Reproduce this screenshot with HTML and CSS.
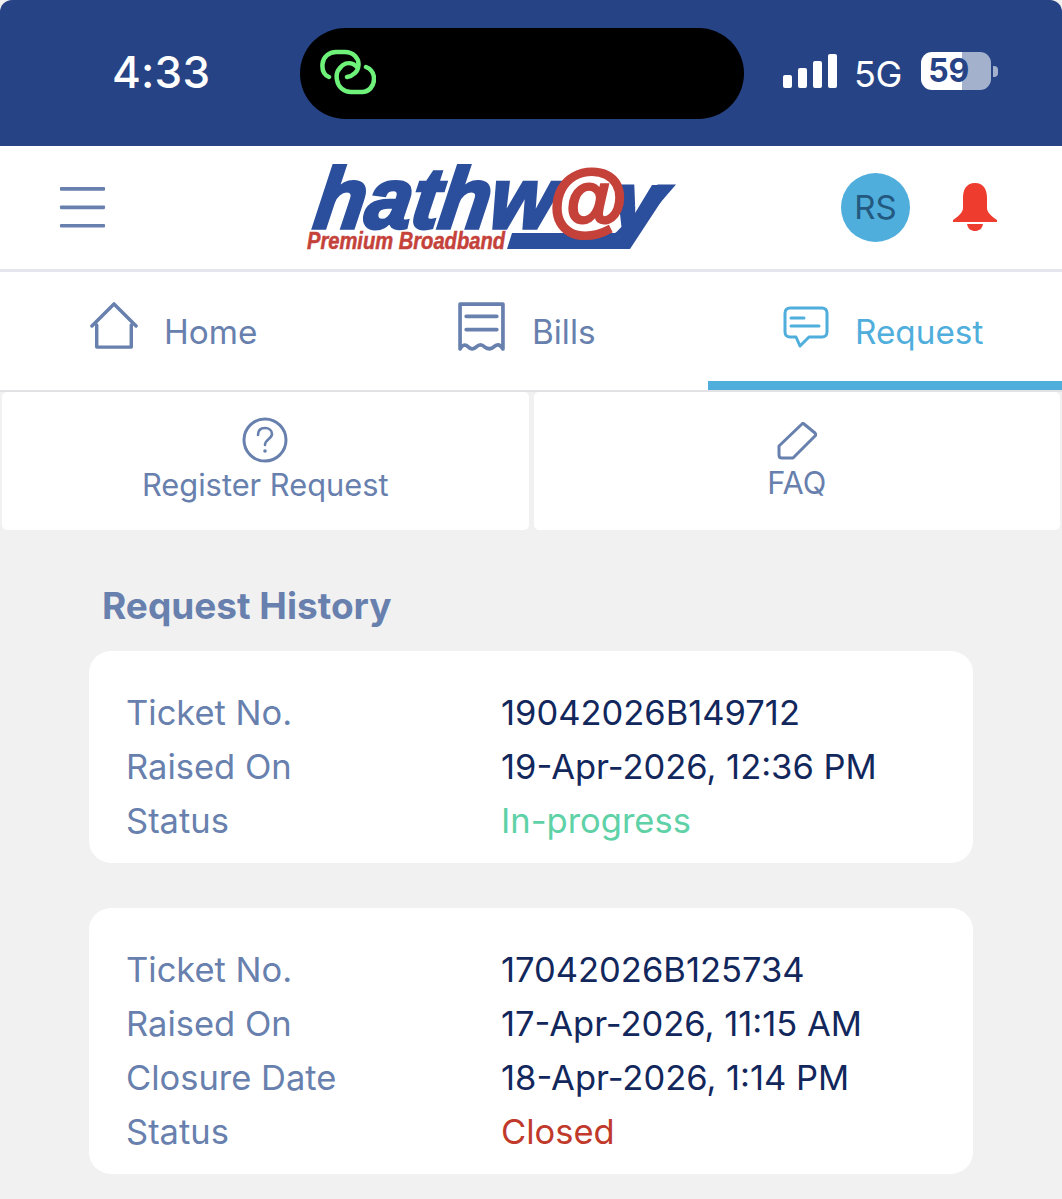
FILE: index.html
```html
<!DOCTYPE html>
<html lang="en">

<head>
  <meta charset="UTF-8" />
  <title>Hathway - Request</title>
  <link rel="stylesheet" href="styles.css">
</head>

<body>
  <div class="status-bar">
    <div class="clock">4:33</div>
    <div class="island">
      <svg class="island-icon" viewBox="0 0 56 46" fill="none" stroke="#6ef27a" stroke-width="4.5" stroke-linecap="round">
        <path d="M9 28C4 26 2 21 2.500 15C3 8 9 3 16 3H25C33 3 39 9 38.500 16C38 23 33 27 27 28" />
        <path d="M20 19C17 22 16 26 17 31C18 38 24 43 31 43H42C49 43 54 37 54 30C54 24 51 20 46 18" />
        <path d="M20 19C23 15 28 13 33 15C35 16 36 17 37 18" />
      </svg>
    </div>
    <div class="status-right">
      <div class="signal">
        <span class="bar-1"></span><span class="bar-2"></span><span class="bar-3"></span><span class="bar-4"></span>
      </div>
      <div class="network">5G</div>
      <div class="battery">
        <div class="battery-body">59</div>
        <div class="battery-cap"></div>
      </div>
    </div>
  </div>

  <header class="top-bar">
    <svg class="menu-icon" viewBox="0 0 44 40">
      <rect x="0" y="0" width="44" height="3.6" rx="1" />
      <rect x="0" y="18" width="44" height="3.6" rx="1" />
      <rect x="0" y="36" width="44" height="3.6" rx="1" />
    </svg>
    <svg class="logo" viewBox="0 0 370 90">
      <path class="logo-blue" d="M208 72L203 88H326L368 24H348L319 72Z" />
      <text class="logo-main" transform="translate(8 67) skewX(-8)" textLength="240" lengthAdjust="spacingAndGlyphs">hathw</text>
      <text class="logo-y" transform="translate(303 67) skewX(-8)" textLength="56" lengthAdjust="spacingAndGlyphs">y</text>
      <text class="logo-at" x="244" y="66">@</text>
      <text class="logo-sub" x="3" y="88" textLength="198" lengthAdjust="spacingAndGlyphs">Premium Broadband</text>
    </svg>
    <div class="top-actions">
      <div class="avatar">RS</div>
      <svg class="bell" viewBox="0 0 44 50">
        <path d="M22 0C31 0 34 7 34 15V25C34 29 38 33 44 37V39H0V37C6 33 10 29 10 25V15C10 7 13 0 22 0Z" />
        <path d="M14 41H30C29 46 26 48 22 48C18 48 15 46 14 41Z" />
      </svg>
    </div>
  </header>

  <nav class="tabs">
    <a class="tab">
      <svg class="tab-icon home-icon" viewBox="0 0 50 50" fill="none" stroke-width="3.6" stroke-linejoin="round" stroke-linecap="round">
        <path d="M2 25L25 2L48 25M7 24V47H43V24" />
      </svg>
      <span>Home</span>
    </a>
    <a class="tab">
      <svg class="tab-icon bills-icon" viewBox="0 0 46 48" fill="none" stroke-width="3.6" stroke-linejoin="round">
        <path d="M2 2H44V46C41 41 38 41 35 44C32 47 29 46 26 44C23 41 20 42 18 44C15 47 12 46 10 44C7 41 4 42 2 46Z" />
        <path d="M8 14H38M8 27H38" stroke-linecap="round" />
      </svg>
      <span>Bills</span>
    </a>
    <a class="tab tab-active">
      <svg class="tab-icon request-icon" viewBox="0 0 46 42" fill="none" stroke-width="3" stroke-linejoin="round" stroke-linecap="round">
        <path d="M7 2H39C42 2 44 4 44 7V26C44 29 42 31 39 31H26L17 40L13 31H7C4 31 2 29 2 26V7C2 4 4 2 7 2Z" />
        <path d="M8 12H21M8 20H36" />
      </svg>
      <span>Request</span>
    </a>
  </nav>

  <div class="sub-tabs">
    <a class="sub-tab">
      <svg class="help-icon" viewBox="0 0 46 46" fill="none">
        <circle cx="23" cy="23" r="21" stroke-width="3" />
        <path d="M16 18C16 13 19 11 23 11C27 11 30 13.500 30 17C30 22 23 22 23 28" stroke-width="2.600" stroke-linecap="round" />
        <circle class="help-dot" cx="23" cy="34" r="1.800" />
      </svg>
      <span>Register Request</span>
    </a>
    <a class="sub-tab sub-tab-faq">
      <svg class="pen-icon" viewBox="0 0 40 40" fill="none" stroke-width="3" stroke-linejoin="round">
        <path d="M27 2L38 11C39 12 39 13 38 14L16 36H5C3 36 2 35 2 33V24L25 2C26 1 26 1 27 2Z" />
      </svg>
      <span>FAQ</span>
    </a>
  </div>

  <main class="history">
    <h2 class="history-title">Request History</h2>

    <section class="card">
      <div class="row"><span class="row-label">Ticket No.</span><span class="row-value">19042026B149712</span></div>
      <div class="row"><span class="row-label">Raised On</span><span class="row-value">19-Apr-2026, 12:36 PM</span></div>
      <div class="row"><span class="row-label">Status</span><span class="row-value status-progress">In-progress</span></div>
    </section>

    <section class="card">
      <div class="row"><span class="row-label">Ticket No.</span><span class="row-value">17042026B125734</span></div>
      <div class="row"><span class="row-label">Raised On</span><span class="row-value">17-Apr-2026, 11:15 AM</span></div>
      <div class="row"><span class="row-label">Closure Date</span><span class="row-value">18-Apr-2026, 1:14 PM</span></div>
      <div class="row"><span class="row-label">Status</span><span class="row-value status-closed">Closed</span></div>
    </section>
  </main>
</body>

</html>
```

FILE: styles.css
```css
* {
  box-sizing: border-box;
}

html,
body {
  height: 100%;
}

body {
  margin: 0;
  background-color: #f1f1f1;
  font-family: "Inter", "Liberation Sans", sans-serif;
  color: #6880ad;
  overflow: hidden;
}

/* status bar */
.status-bar {
  height: 146px;
  background-color: #264385;
  border-radius: 12px 12px 0 0;
  display: flex;
  align-items: flex-start;
  padding-top: 28px;
}

.clock {
  width: 300px;
  padding-left: 112px;
  padding-top: 19px;
  color: #fff;
  font-size: 44px;
  line-height: 50px;
  font-weight: 500;
  letter-spacing: 0.2px;
}

.island {
  width: 444px;
  height: 91px;
  background-color: #000;
  border-radius: 46px;
  display: flex;
  align-items: center;
  padding-left: 20px;
  padding-bottom: 4px;
}

.island-icon {
  width: 56px;
  height: 46px;
}

.status-right {
  display: flex;
  align-items: flex-start;
  padding-left: 39px;
  padding-top: 26px;
}

.signal {
  display: flex;
  align-items: flex-end;
  gap: 6px;
  height: 34px;
}

.signal span {
  width: 9px;
  background-color: #fff;
  border-radius: 2px;
}

.bar-1 {
  height: 13px;
}

.bar-2 {
  height: 20px;
}

.bar-3 {
  height: 27px;
}

.bar-4 {
  height: 34px;
}

.network {
  margin-left: 17px;
  color: #fff;
  font-size: 36px;
  line-height: 40px;
  font-weight: 400;
  letter-spacing: -0.5px;
}

.battery {
  display: flex;
  align-items: center;
  margin-left: 19px;
  margin-top: -2px;
}

.battery-body {
  width: 70px;
  height: 38px;
  border-radius: 11px;
  padding-right: 14px;
  background-image: linear-gradient(90deg, #fff 0, #fff 41px, #a3b1cd 41px);
  color: #264385;
  font-size: 32px;
  line-height: 38px;
  font-weight: 700;
  text-align: center;
}

.battery-cap {
  width: 5px;
  height: 11px;
  margin-left: 2px;
  background-color: #a3b1cd;
  border-radius: 0 4px 4px 0;
}

/* logo row */
.top-bar {
  height: 126px;
  background-color: #fff;
  display: flex;
  align-items: center;
  padding-left: 59px;
  border-bottom: 3px solid #e4e6ee;
}

.menu-icon {
  width: 47px;
  height: 41px;
  fill: #6880ad;
}

.logo {
  width: 370px;
  height: 90px;
  margin-left: 198px;
  margin-bottom: 3px;
  overflow: visible;
}

.logo-blue {
  fill: #2b4f9c;
}

.logo-main,
.logo-y {
  fill: #2b4f9c;
  stroke: #2b4f9c;
  font-family: "Liberation Sans", sans-serif;
  font-weight: 700;
  font-style: italic;
}

.logo-main {
  font-size: 86px;
  stroke-width: 3.5px;
}

.logo-y {
  font-size: 80px;
  stroke-width: 2.5px;
}

.logo-at {
  fill: #c5423a;
  stroke: #c5423a;
  stroke-width: 3px;
  font-family: "Liberation Sans", sans-serif;
  font-size: 80px;
  font-weight: 700;
  font-style: italic;
}

.logo-sub {
  fill: #c5423a;
  stroke: #c5423a;
  stroke-width: 0.5px;
  font-family: "Liberation Sans", sans-serif;
  font-size: 23px;
  font-weight: 700;
  font-style: italic;
}

.top-actions {
  display: flex;
  align-items: center;
  margin-left: 167px;
}

.avatar {
  width: 69px;
  height: 69px;
  border-radius: 50%;
  background-color: #4faedc;
  color: #24597f;
  font-size: 33px;
  line-height: 69px;
  text-align: center;
}

.bell {
  width: 44px;
  height: 50px;
  margin-left: 43px;
  fill: #ee3c2f;
}

/* main tabs */
.tabs {
  height: 120px;
  background-color: #fff;
  display: flex;
  border-bottom: 2px solid #e2e2e4;
}

.tab {
  width: 354px;
  display: flex;
  align-items: center;
  font-size: 33.3px;
  padding-top: 2px;
}

.tab:nth-child(1) {
  padding-left: 90px;
}

.tab:nth-child(2) {
  padding-left: 104px;
}

.tab:nth-child(3) {
  padding-left: 75px;
}

.tab-icon {
  stroke: #6880ad;
}

.home-icon {
  width: 48px;
  height: 50px;
  margin-right: 26px;
  margin-bottom: 12px;
}

.bills-icon {
  width: 47px;
  height: 49px;
  margin-right: 27px;
  margin-bottom: 12px;
}

.request-icon {
  width: 46px;
  height: 42px;
  margin-right: 26px;
  margin-bottom: 11px;
  stroke: #4faedc;
}

.tab-active {
  color: #4faedc;
  border-bottom: 9px solid #4faedc;
  padding-top: 11px;
}

/* sub tabs */
.sub-tabs {
  height: 139px;
  display: flex;
  gap: 5px;
  padding: 0 2px;
}

.sub-tab {
  flex: 1;
  height: 138px;
  background-color: #fff;
  border-radius: 5px;
  display: flex;
  flex-direction: column;
  align-items: center;
  padding-top: 25px;
  font-size: 30.8px;
  line-height: 36px;
}

.help-icon {
  width: 46px;
  height: 46px;
  stroke: #6880ad;
  margin-bottom: 4px;
}

.help-dot {
  fill: #6880ad;
  stroke: none;
}

.sub-tab-faq {
  padding-top: 30px;
}

.pen-icon {
  width: 40px;
  height: 40px;
  stroke: #6880ad;
  margin-bottom: 3px;
}

/* history */
.history {
  padding: 53px 89px 0;
}

.history-title {
  margin: 0 0 23px 13px;
  font-size: 37px;
  line-height: 44px;
  font-weight: 700;
  color: #6880ad;
}

.card {
  background-color: #fff;
  border-radius: 22px;
  padding: 35px 37px 15px;
  margin-bottom: 45px;
}

.row {
  display: flex;
  height: 54px;
  font-size: 34.5px;
  line-height: 54px;
}

.row-label {
  width: 375px;
}

.row-value {
  color: #12275c;
}

.status-progress {
  color: #5ed1a6;
}

.status-closed {
  color: #c0392b;
}
```
